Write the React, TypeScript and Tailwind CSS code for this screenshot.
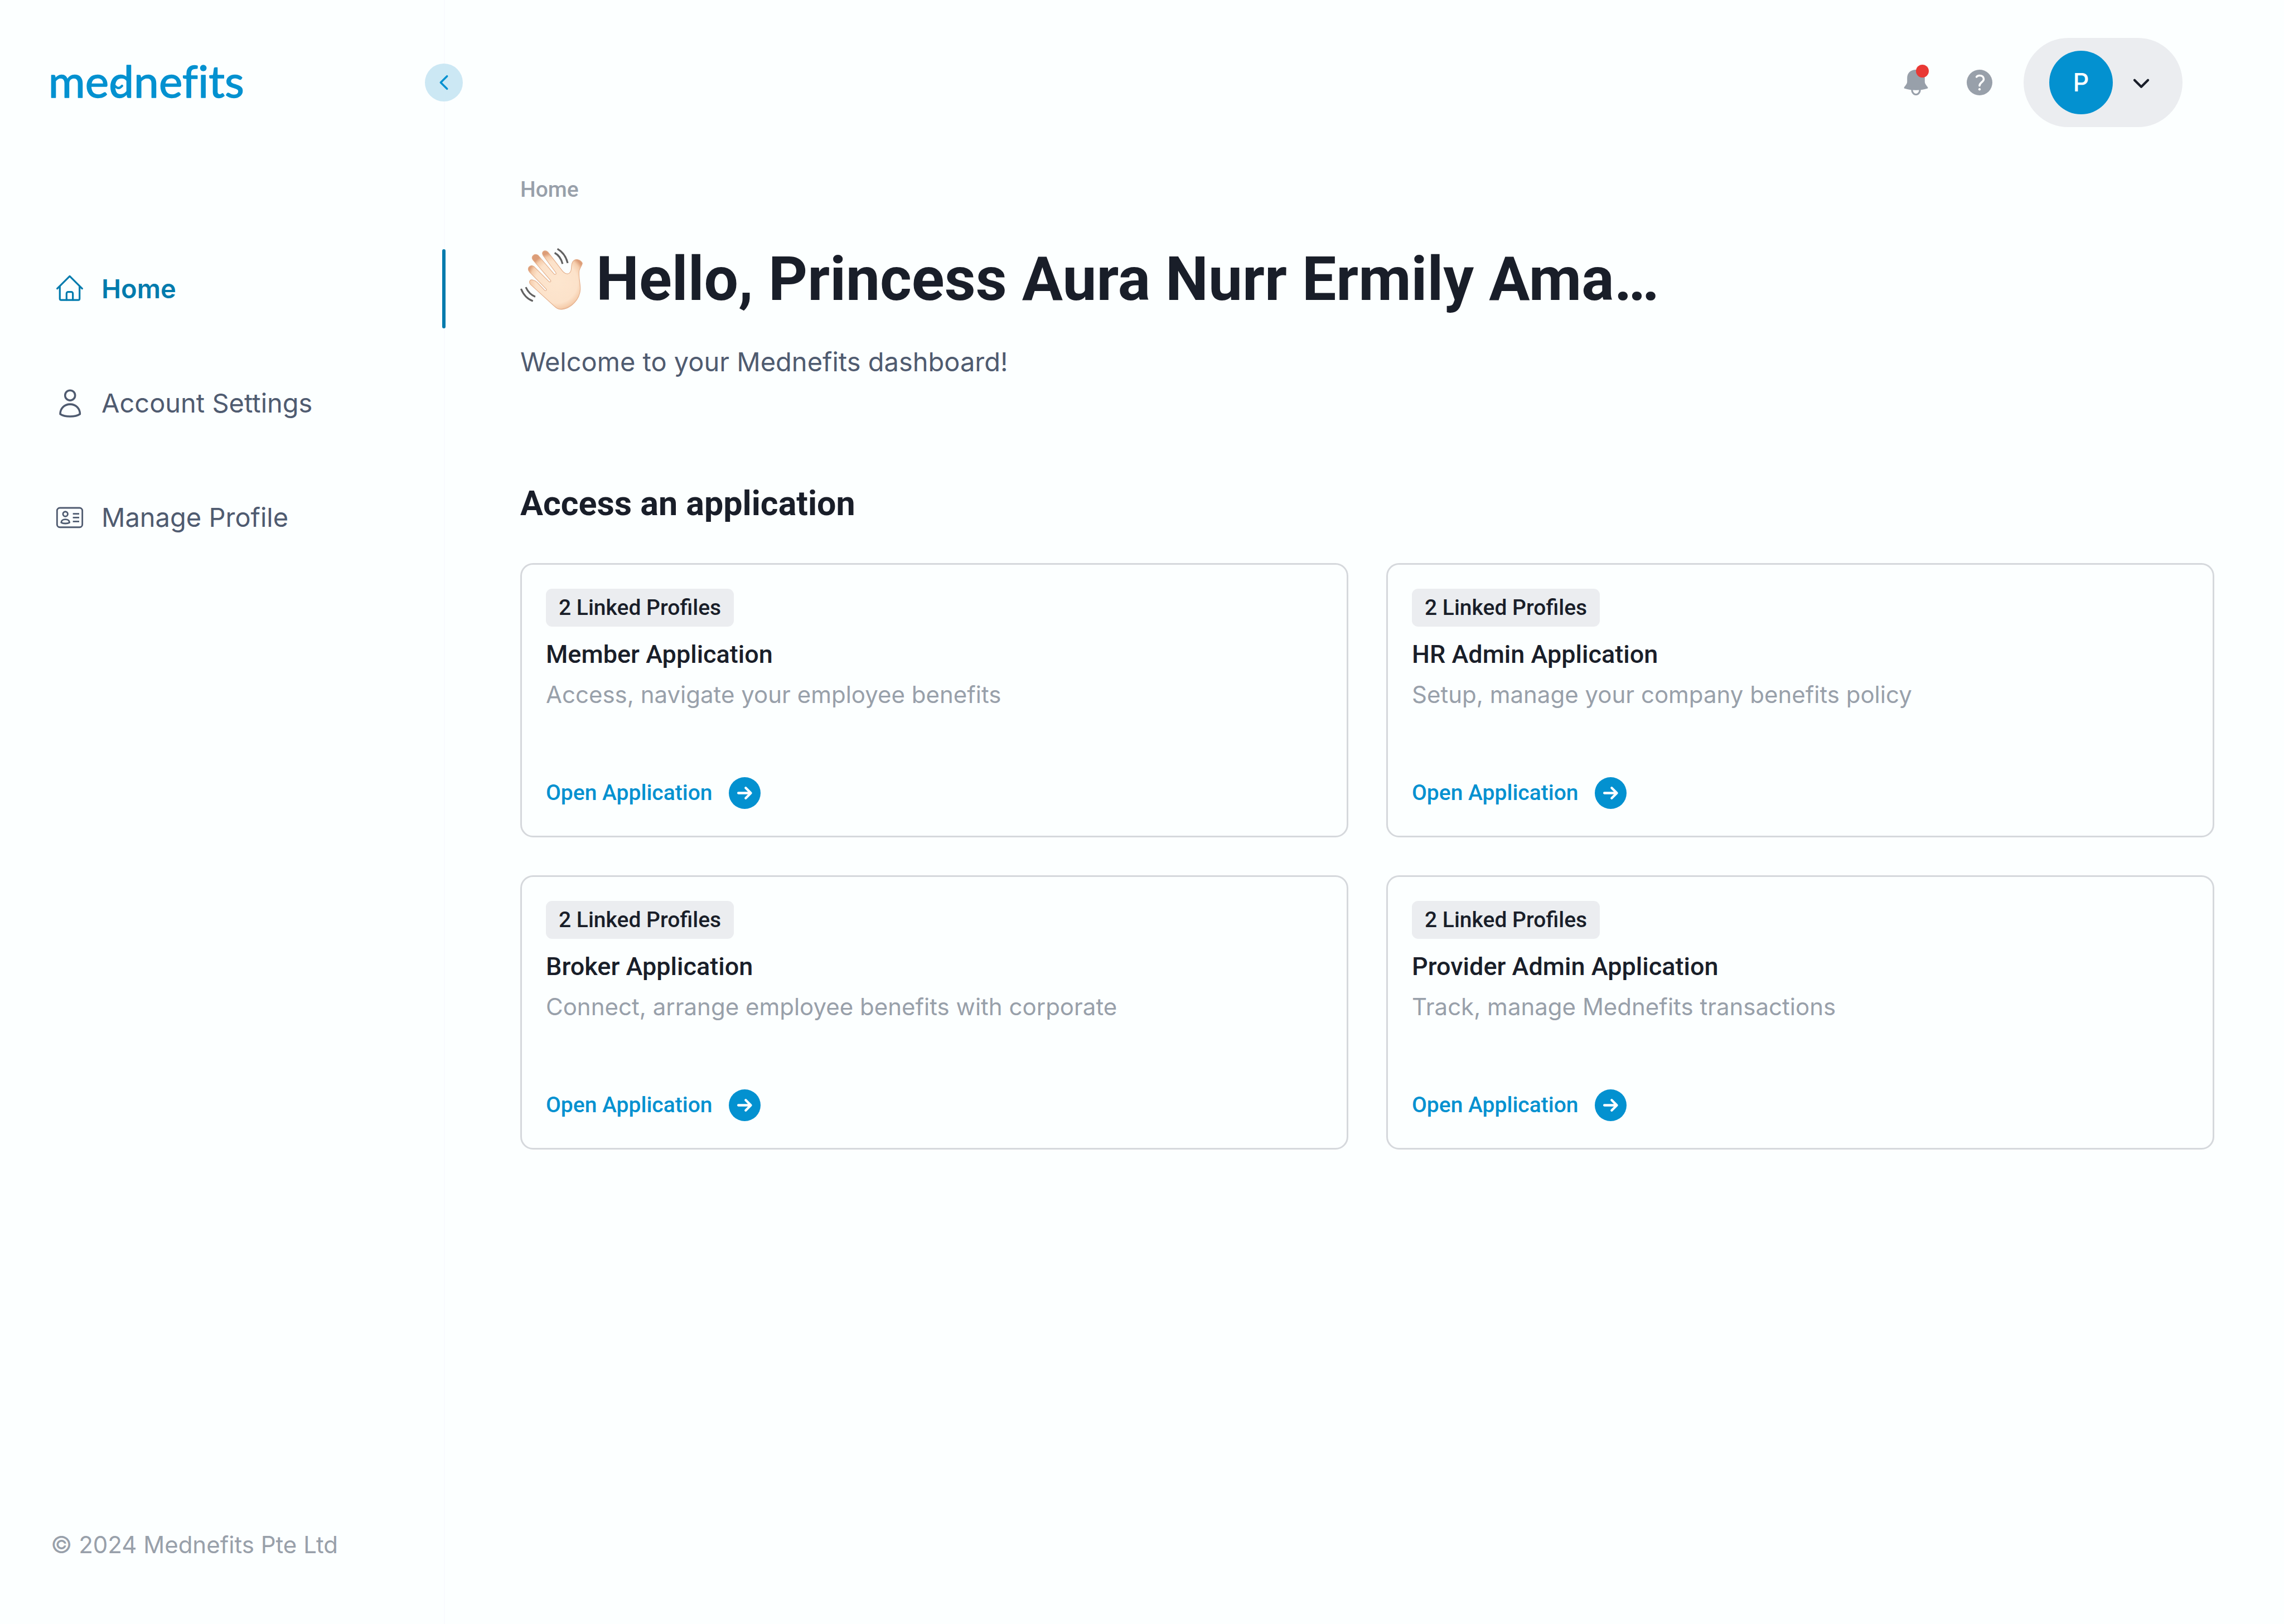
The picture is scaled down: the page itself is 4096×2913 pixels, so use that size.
import React, { useState } from "react";

type IconProps = { className?: string };

function Logo({ className }: IconProps) {
  return (
    <svg viewBox="0 0 480 88" className={className} role="img" aria-label="mednefits">
      <text
        x="-6"
        y="86"
        fontSize="113"
        fontFamily="Lato, sans-serif"
        fontWeight="400"
        fill="#0391d0"
        stroke="#0391d0"
        strokeWidth="2"
        strokeLinejoin="round"
        style={{ fontVariantLigatures: "none" }}
      >
        mednefits
      </text>
      <path d="M162 56Q171 67 180 56" fill="none" stroke="#0391d0" strokeWidth="6" strokeLinecap="round" />
    </svg>
  );
}

function HomeIcon({ className }: IconProps) {
  return (
    <svg viewBox="0 0 96 96" className={className} fill="none" stroke="currentColor" strokeWidth="4.5" strokeLinecap="round" strokeLinejoin="round" aria-hidden="true">
      <path d="M16.500 47.500 48 16l31.500 31.500" />
      <path d="M23 42v31a3.500 3.500 0 0 0 3.500 3.500h43a3.500 3.500 0 0 0 3.500-3.500V42" />
      <path d="M40 76V60a4 4 0 0 1 4-4h8a4 4 0 0 1 4 4v16" />
    </svg>
  );
}

function PersonIcon({ className }: IconProps) {
  return (
    <svg viewBox="0 0 96 96" className={className} fill="none" stroke="currentColor" strokeWidth="5" strokeLinejoin="round" aria-hidden="true">
      <circle cx="49" cy="28.500" r="12.700" />
      <path d="M24 76C24 62 34 51 49 51s25 11 25 25c-6 4-15 6-25 6s-19-2-25-6Z" />
    </svg>
  );
}

function IdCardIcon({ className }: IconProps) {
  return (
    <svg viewBox="0 0 96 96" className={className} fill="none" stroke="currentColor" strokeWidth="4" strokeLinejoin="round" aria-hidden="true">
      <rect x="16" y="24" width="64" height="49" rx="7" />
      <circle cx="37" cy="39.500" r="6" />
      <path d="M26.500 61c0-5 4.500-8 10.500-8s10.500 3 10.500 8c-3 2-6 2.500-10.500 2.500S29.500 63 26.500 61Z" />
      <path d="M56 39h16M56 48.500h16M56 58.500h16" />
    </svg>
  );
}

function BellIcon({ className }: IconProps) {
  return (
    <svg viewBox="0 0 64 64" className={className} aria-hidden="true">
      <path d="M22 50a10 12 0 0 0 20 0" fill="none" stroke="#98a0aa" strokeWidth="4.5" />
      <path
        d="M32 0C18 0 10 9 10 21v9C10 36 5 40 2.500 44c-.8 1.500-.3 2.500 1.200 3C20 52.500 44 52.500 60.300 47c1.500-.5 2-1.500 1.200-3C59 40 54 36 54 30v-9C54 9 46 0 32 0Z"
        fill="#98a0aa"
      />
    </svg>
  );
}

function HelpIcon({ className }: IconProps) {
  return (
    <svg viewBox="0 0 64 64" className={className} aria-hidden="true">
      <circle cx="32" cy="32" r="32" fill="#98a0aa" />
      <path d="M24.500 18c1-2 4-3.500 7.500-3.500 6 0 10.500 3.500 10.500 9C42.500 31 32 31.500 32 40" fill="none" stroke="#fff" strokeWidth="5" strokeLinecap="round" />
      <circle cx="32" cy="49" r="3" fill="#fff" />
    </svg>
  );
}

function ArrowCircle({ className }: IconProps) {
  return (
    <svg viewBox="0 0 80 80" className={className} aria-hidden="true">
      <circle cx="40" cy="40" r="40" fill="#0391d0" />
      <path d="M24 40h31M42.500 27 55.500 40 42.500 53" fill="none" stroke="#fff" strokeWidth="6" strokeLinecap="round" strokeLinejoin="round" />
    </svg>
  );
}

function WavingHand({ className }: IconProps) {
  return (
    <svg viewBox="0 0 158 158" className={className} role="img" aria-label="Waving hand">
      <defs>
        <radialGradient id="palm" gradientUnits="userSpaceOnUse" cx="92" cy="86" r="76">
          <stop offset="0" stopColor="#fde6cf" />
          <stop offset="0.7" stopColor="#fce2ca" />
          <stop offset="0.88" stopColor="#f5cdac" />
          <stop offset="1" stopColor="#dc9d78" />
        </radialGradient>
      </defs>
      <path
        d="M86 147 L27 93 C20 86 24 78 33 81 C37 82 40 84 43 87 L62 107 C65 109 68 106 65 103 L23 60 C16 51 24 41 34 46 L73 85 C76 87 79 84 76 81 L32 30 C26 21 36 12 45 18 L86 66 C89 68 92 65 90 62 L58 19 C52 9 62 3 70 10 L106 57 C113 66 123 69 128 58 C131 50 127 39 135 32 C143 25 154 32 157 38 C157 43 150 51 149 58 C147 71 152 88 152 104 C151 130 128 153 105 155 C97 156 91 152 86 147 Z"
        fill="url(#palm)"
        stroke="#e3ab86"
        strokeWidth="1.5"
        strokeLinejoin="round"
      />
      <g fill="none" stroke="#616161" strokeWidth="4.500">
        <path d="M94 2C108 10 116 22 120 38" />
        <path d="M87 12C98 18 104 28 107 40" />
        <path d="M2 103C8 118 18 129 32 134" />
        <path d="M14 99C19 110 27 119 38 123" />
      </g>
    </svg>
  );
}

const navItems = [
  { label: "Home", Icon: HomeIcon, active: true },
  { label: "Account Settings", Icon: PersonIcon, active: false },
  { label: "Manage Profile", Icon: IdCardIcon, active: false },
];

const applications = [
  { name: "Member Application", description: "Access, navigate your employee benefits" },
  { name: "HR Admin Application", description: "Setup, manage your company benefits policy" },
  { name: "Broker Application", description: "Connect, arrange employee benefits with corporate" },
  { name: "Provider Admin Application", description: "Track, manage Mednefits transactions" },
];

function Sidebar() {
  const [collapsed, setCollapsed] = useState(false);
  return (
    <aside className="relative flex w-[798px] shrink-0 flex-col border-r-2 border-[#f9fbfe] pt-[114px] pb-[112px]">
      <Logo className="ml-[91px] h-[63px] w-[341px] overflow-visible" />
      <button
        type="button"
        aria-label="Collapse sidebar"
        aria-expanded={!collapsed}
        onClick={() => setCollapsed(!collapsed)}
        className="absolute top-[114px] -right-[34px] size-[68px] rounded-full bg-[#cce8f4]"
      >
        <svg viewBox="0 0 96 96" className="size-full" aria-hidden="true">
          <path d="M56 32 40 48l16 16" fill="none" stroke="#0391d0" strokeWidth="5" strokeLinecap="round" strokeLinejoin="round" />
        </svg>
      </button>
      <nav aria-label="Main" className="mt-[270px] flex flex-col gap-[63px]">
        {navItems.map(({ label, Icon, active }) => (
          <a
            key={label}
            href="#"
            aria-current={active ? "page" : undefined}
            className={
              active
                ? "relative flex h-[142px] items-center gap-[23px] pl-[91px] font-semibold text-[#007bad]"
                : "relative flex h-[142px] items-center gap-[23px] pl-[91px] text-[#4f5b70]"
            }
          >
            <Icon className="size-[68px]" />
            <span className="text-[47px] leading-[68px]">{label}</span>
            {active && <span className="absolute top-0 -right-[3px] h-full w-[6px] rounded-full bg-[#007bad]" />}
          </a>
        ))}
      </nav>
      <p className="mt-auto pl-[91px] text-[42px] leading-[60px] text-[#98a0aa]">© 2024 Mednefits Pte Ltd</p>
    </aside>
  );
}

function TopBar() {
  return (
    <header className="flex items-center justify-end pr-[57px]">
      <button type="button" aria-label="Notifications" className="relative">
        <BellIcon className="size-[46px]" />
        <span className="absolute -top-[9px] right-0 size-[23px] rounded-full bg-[#e93935]" />
      </button>
      <button type="button" aria-label="Help" className="ml-[68px]">
        <HelpIcon className="size-[46px]" />
      </button>
      <button type="button" aria-label="Account menu" className="ml-[56px] flex h-[160px] items-center gap-[17px] rounded-full bg-[#ebedf0] pr-[40px] pl-[46px]">
        <span className="flex size-[114px] items-center justify-center rounded-full bg-[#0391d0] text-[45px] font-medium text-white">P</span>
        <svg viewBox="0 0 96 96" className="size-[68px]" aria-hidden="true">
          <path d="M31 42l17 17 17-17" fill="none" stroke="#191e29" strokeWidth="6" strokeLinecap="round" strokeLinejoin="round" />
        </svg>
      </button>
    </header>
  );
}

function ApplicationCard({ name, description }: { name: string; description: string }) {
  return (
    <article className="flex flex-col items-start rounded-[23px] border-3 border-[#d5d8dc] p-[43px]">
      <span className="rounded-[11px] bg-[#ebedf0] px-[23px] font-[Roboto,sans-serif] text-[39px] leading-[68px] font-medium text-[#191e29]">
        2 Linked Profiles
      </span>
      <h3 className="mt-[16px] font-[Roboto,sans-serif] text-[45px] leading-[68px] font-medium text-[#191e29]">{name}</h3>
      <p className="mt-[4px] text-[42px] leading-[68px] text-[#98a0aa]">{description}</p>
      <a href="#" className="mt-[108px] flex h-[68px] items-center gap-[30px] font-[Roboto,sans-serif] text-[39px] font-medium text-[#0391d0]">
        Open Application
        <ArrowCircle className="size-[57px]" />
      </a>
    </article>
  );
}

export default function App() {
  return (
    <div className="flex min-h-screen bg-[#fcffff] font-[Inter,sans-serif]">
      <Sidebar />
      <main className="min-w-0 flex-1 pt-[68px] pr-[125px] pl-[135px]">
        <TopBar />
        <nav aria-label="Breadcrumb" className="mt-[85px] font-[Roboto,sans-serif] text-[39px] leading-[54px] font-medium text-[#98a0aa]">
          <a href="#">Home</a>
        </nav>
        <h1 className="mt-[66px] flex items-center gap-[24px] font-[Roboto,sans-serif] text-[109px] leading-[136px] font-bold text-[#191e29]">
          <WavingHand className="size-[112px]" />
          Hello, Princess Aura Nurr Ermily Ama…
        </h1>
        <p className="mt-[46px] text-[47px] leading-[68px] text-[#4f5b70]">Welcome to your Mednefits dashboard!</p>
        <h2 className="mt-[178px] font-[Roboto,sans-serif] text-[61px] leading-[84px] font-bold text-[#191e29]">Access an application</h2>
        <section aria-label="Applications" className="mt-[65px] grid grid-cols-2 gap-[68px]">
          {applications.map((app) => (
            <ApplicationCard key={app.name} name={app.name} description={app.description} />
          ))}
        </section>
      </main>
    </div>
  );
}
